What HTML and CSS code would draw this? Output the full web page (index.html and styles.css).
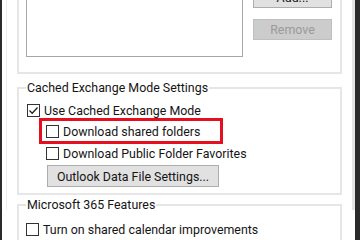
FILE: index.html
```html
<!DOCTYPE html>
<html lang="en">
<head>
  <meta charset="UTF-8" />
  <title>Microsoft Exchange - Advanced</title>
  <link rel="stylesheet" href="styles.css">
</head>
<body>
  <div class="window">
    <div class="frame">
      <fieldset class="group group-mailboxes">
        <div class="mailbox-row">
          <div class="listbox"></div>
          <div class="side-buttons">
            <button class="btn">Add...</button>
            <button class="btn" disabled>Remove</button>
          </div>
        </div>
      </fieldset>

      <fieldset class="group group-cached">
        <legend>Cached Exchange Mode Settings</legend>
        <div class="check-row first">
          <span class="box checked">
            <svg viewBox="0 0 13 13" width="13" height="13"><path d="M2.5 6.5 L5.2 9.2 L10.5 3.5" fill="none" stroke="#222" stroke-width="1.3"/></svg>
          </span>
          <span class="label">Use Cached Exchange Mode</span>
        </div>
        <div class="check-row highlight">
          <span class="box"></span>
          <span class="label">Download shared folders</span>
        </div>
        <div class="check-row nested">
          <span class="box"></span>
          <span class="label">Download Public Folder Favorites</span>
        </div>
        <button class="btn data-file">Outlook Data File Settings...</button>
      </fieldset>

      <fieldset class="group group-m365">
        <legend>Microsoft 365 Features</legend>
        <div class="check-row calendar">
          <span class="box"></span>
          <span class="label">Turn on shared calendar improvements</span>
        </div>
      </fieldset>
    </div>
  </div>
</body>
</html>
```

FILE: styles.css
```css
body {
  margin: 0;
  background: #2b2b2b;
  font-family: Roboto, 'Open Sans', sans-serif;
  font-size: 12.4px;
  color: #151515;
}
.window {
  margin: 0 5px 0 2px;
  background: #fff;
  height: 240px;
  overflow: hidden;
}
.frame {
  margin-left: 4px;
  border-left: 1px solid #ededed;
  border-right: 3px solid #e4e4e4;
  height: 100%;
  padding: 0 10px;
  box-sizing: border-box;
}
.group {
  border: 2px solid #e6e6e6;
  margin: 0;
  padding: 0 8px 0 7px;
  min-width: 0;
}
.group legend {
  padding: 0 1px;
  line-height: 16px;
}

/* mailboxes */
.group-mailboxes {
  margin-top: -30px;
  padding-top: 15px;
  padding-bottom: 15px;
}
.mailbox-row {
  display: flex;
  gap: 10px;
}
.listbox {
  width: 217px;
  height: 70px;
  border: 1px solid #a6a6ab;
  box-sizing: border-box;
  background: #fff;
}
.side-buttons {
  display: flex;
  flex-direction: column;
  gap: 11px;
}
.btn {
  font: inherit;
  color: #151515;
  background: #e1e1e1;
  border: 1px solid #adadad;
  height: 21px;
  width: 79px;
  padding: 0;
  line-height: 19px;
}
.btn:disabled {
  background: #cccccc;
  border-color: #bfbfbf;
  color: #9b9b9b;
}

/* cached mode */
.group-cached {
  margin-top: 6px;
  padding-bottom: 6px;
}
.check-row {
  display: flex;
  align-items: center;
  gap: 4px;
  height: 18px;
}
.check-row.first {
  margin-top: 5px;
  margin-left: 1px;
}
.check-row.highlight {
  margin: -1px 0 0 13px;
  width: 184px;
  height: 26px;
  border: 3px solid #e5101f;
  box-sizing: border-box;
  padding-left: 4px;
}
.check-row.nested {
  margin-left: 20px;
  height: 19px;
}
.box {
  width: 13px;
  height: 13px;
  border: 1px solid #333;
  box-sizing: border-box;
  background: #fff;
  flex: none;
  display: grid;
  place-items: center;
}
.box svg {
  display: block;
  margin: -1px;
}
.btn.data-file {
  display: block;
  margin: 2px 0 0 21px;
  width: 172px;
  height: 22px;
}

/* microsoft 365 */
.group-m365 {
  margin-top: 2px;
  padding-bottom: 10px;
}
.check-row.calendar {
  margin-top: 7px;
}
```
